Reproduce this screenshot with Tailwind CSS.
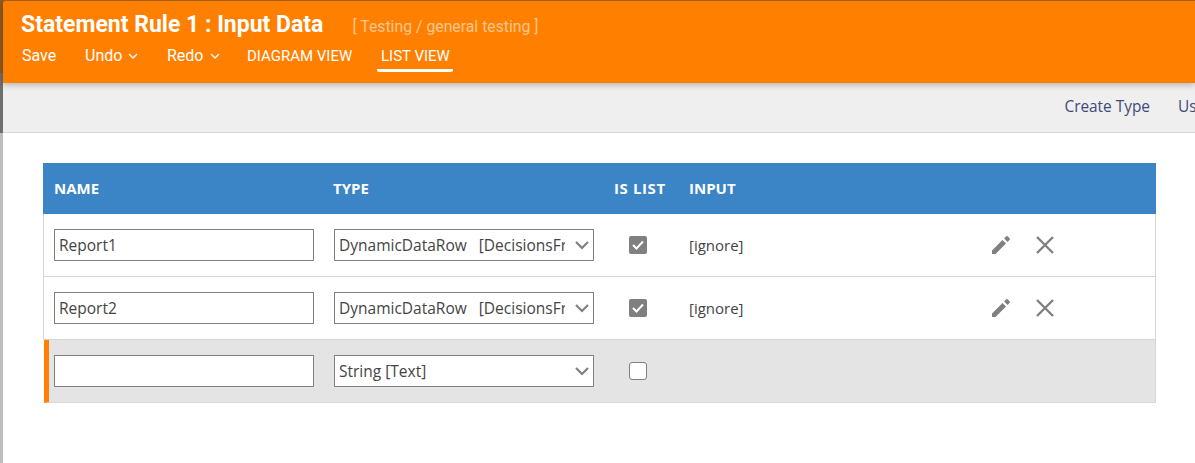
<!DOCTYPE html>
<html lang="en">
<head>
    <meta charset="UTF-8">
    <title>Statement Rule 1 : Input Data</title>
    <script src="https://cdn.jsdelivr.net/npm/@tailwindcss/browser@4"></script>
</head>
<body class="bg-white h-[463px] w-[1195px] overflow-hidden font-['Open_Sans',sans-serif] text-[#444]">
<div class="flex h-full">
    <!-- sliver of the window behind -->
    <div class="w-[3px] shrink-0 flex flex-col">
        <div class="h-[73px] bg-[#8f5a1c]"></div>
        <div class="h-[60px] bg-[#6f6f6f]"></div>
        <div class="flex-1 bg-[#bdbdbd]"></div>
    </div>
    <div class="flex-1 min-w-0">
        <!-- HEADER -->
        <div class="bg-[#a9651a] pt-[1px]">
        <header class="relative z-10 h-[82px] bg-[#ff8000] rounded-tl-[3px] shadow-[0_2px_6px_rgba(0,0,0,0.25)] pl-[18px] pt-[11px] text-white font-['Roboto',sans-serif]">
            <div class="flex items-baseline h-[26px]">
                <h1 class="text-[23px] font-bold leading-[26px]">Statement Rule 1 : Input Data</h1>
                <span class="ml-[29px] text-[15.800px] text-[#ffc690]">[ Testing / general testing ]</span>
            </div>
            <nav class="flex items-start mt-[6px] text-[16px] leading-[24px]">
                <a class="w-[64px] pl-[1px]">Save</a>
                <a class="w-[82px] flex items-center">Undo
                    <svg class="ml-[6px] mt-[1px]" width="10" height="7" viewBox="0 0 10 7" fill="none" stroke="white" stroke-width="1.300"><path d="M1 1l4 4 4-4"/></svg>
                </a>
                <a class="w-[80px] flex items-center">Redo
                    <svg class="ml-[6px] mt-[1px]" width="10" height="7" viewBox="0 0 10 7" fill="none" stroke="white" stroke-width="1.300"><path d="M1 1l4 4 4-4"/></svg>
                </a>
                <a class="w-[130px] text-[15px]">DIAGRAM VIEW</a>
                <a class="text-[15px] px-[4px] w-[76px] h-[28px] border-b-[3px] border-white rounded-b-[2px] whitespace-nowrap">LIST VIEW</a>
            </nav>
        </header>
        </div>

        <!-- TOOLBAR -->
        <div class="h-[50px] bg-[#efefef] border-b border-[#d8d8d8] flex items-center justify-end gap-[28px] pb-[2px] text-[15.400px] text-[#3d4a7a] overflow-hidden whitespace-nowrap">
            <a>Create Type</a>
            <a class="w-[17px] overflow-hidden">Use</a>
        </div>

        <!-- TABLE -->
        <div class="ml-[40px] mt-[30px] w-[1113px]">
            <div class="flex items-center h-[51px] bg-[#3b84c5] text-white text-[15px] font-bold pb-[1px]">
                <div class="w-[290px] pl-[11px]">NAME</div>
                <div class="w-[281px]">TYPE</div>
                <div class="w-[75px] tracking-[0.6px]">IS LIST</div>
                <div>INPUT</div>
            </div>

            <div class="flex items-center h-[63px] bg-white border-x border-b border-[#d6d6d6]">
                <div class="w-[290px] pl-[10px]">
                    <input class="w-[260px] h-[32px] bg-white border border-[#808080] px-[4px] text-[15.500px] text-[#444]" value="Report1">
                </div>
                <div class="w-[280px]">
                    <div class="w-[260px] h-[32px] bg-white border border-[#808080] pl-[4px] text-[15.500px] leading-[30px] flex justify-between pr-[4px] whitespace-nowrap">
                        <span class="w-[226px] overflow-hidden whitespace-pre">DynamicDataRow   [DecisionsFramework</span>
                        <svg class="mt-[11px]" width="14" height="9" viewBox="0 0 14 9" fill="none" stroke="#808080" stroke-width="2.200"><path d="M1 1l6 6 6-6"/></svg>
                    </div>
                </div>
                <div class="w-[75px] pl-[15px]">
                    <div class="w-[18px] h-[18px] rounded-[2px] bg-[#808080] flex items-center justify-center">
                        <svg width="12" height="10" viewBox="0 0 12 10" fill="none" stroke="white" stroke-width="2"><path d="M1 5l3.500 3.500L11 1.500"/></svg>
                    </div>
                </div>
                <div class="w-[297px] text-[15px]">[ignore]</div>
                <svg class="ml-[5px]" width="20" height="20" viewBox="0 0 20 20" fill="#808080"><path d="M1 15.500V19h3.500L15 8.500 11.500 5zM18.700 4.800a1 1 0 0 0 0-1.400L16.600 1.300a1 1 0 0 0-1.400 0l-2.100 2.100 3.500 3.500z"/></svg>
                <svg class="ml-[24px]" width="20" height="20" viewBox="0 0 20 20" fill="none" stroke="#808080" stroke-width="2.400"><path d="M2 2l16 16M18 2L2 18"/></svg>
            </div>

            <div class="flex items-center h-[63px] bg-white border-x border-b border-[#d6d6d6]">
                <div class="w-[290px] pl-[10px]">
                    <input class="w-[260px] h-[32px] bg-white border border-[#808080] px-[4px] text-[15.500px] text-[#444]" value="Report2">
                </div>
                <div class="w-[280px]">
                    <div class="w-[260px] h-[32px] bg-white border border-[#808080] pl-[4px] text-[15.500px] leading-[30px] flex justify-between pr-[4px] whitespace-nowrap">
                        <span class="w-[226px] overflow-hidden whitespace-pre">DynamicDataRow   [DecisionsFramework</span>
                        <svg class="mt-[11px]" width="14" height="9" viewBox="0 0 14 9" fill="none" stroke="#808080" stroke-width="2.200"><path d="M1 1l6 6 6-6"/></svg>
                    </div>
                </div>
                <div class="w-[75px] pl-[15px]">
                    <div class="w-[18px] h-[18px] rounded-[2px] bg-[#808080] flex items-center justify-center">
                        <svg width="12" height="10" viewBox="0 0 12 10" fill="none" stroke="white" stroke-width="2"><path d="M1 5l3.500 3.500L11 1.500"/></svg>
                    </div>
                </div>
                <div class="w-[297px] text-[15px]">[ignore]</div>
                <svg class="ml-[5px]" width="20" height="20" viewBox="0 0 20 20" fill="#808080"><path d="M1 15.500V19h3.500L15 8.500 11.500 5zM18.700 4.800a1 1 0 0 0 0-1.400L16.600 1.300a1 1 0 0 0-1.400 0l-2.100 2.100 3.500 3.500z"/></svg>
                <svg class="ml-[24px]" width="20" height="20" viewBox="0 0 20 20" fill="none" stroke="#808080" stroke-width="2.400"><path d="M2 2l16 16M18 2L2 18"/></svg>
            </div>

            <!-- new row -->
            <div class="flex items-center h-[63px] bg-[#e4e4e4] border-r border-b border-[#d6d6d6] border-l-[5px] border-l-[#ff8000] ml-[1px]">
                <div class="w-[285px] pl-[5px]">
                    <input class="w-[260px] h-[32px] bg-white border border-[#808080] px-[4px] text-[15.500px]">
                </div>
                <div class="w-[280px]">
                    <div class="w-[260px] h-[32px] bg-white border border-[#808080] pl-[4px] text-[15.500px] leading-[30px] flex justify-between pr-[4px]">
                        <span>String [Text]</span>
                        <svg class="mt-[11px]" width="14" height="9" viewBox="0 0 14 9" fill="none" stroke="#808080" stroke-width="2.200"><path d="M1 1l6 6 6-6"/></svg>
                    </div>
                </div>
                <div class="w-[75px] pl-[15px]">
                    <div class="w-[18px] h-[18px] rounded-[3px] bg-white border-[1.500px] border-[#808080]"></div>
                </div>
            </div>
        </div>
    </div>
</div>
</body>
</html>
